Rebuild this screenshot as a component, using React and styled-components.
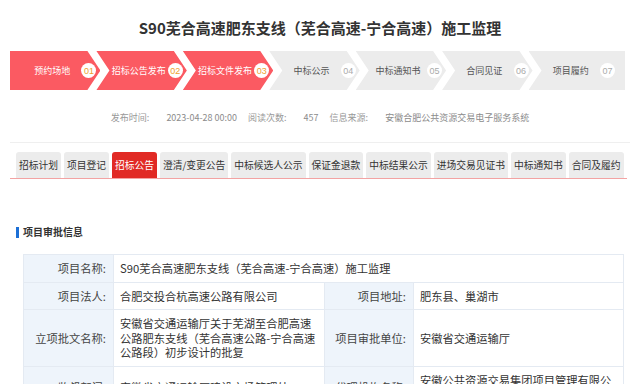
import React from 'react';
import styled, { createGlobalStyle, css } from 'styled-components';

const GlobalStyle = createGlobalStyle`
  html, body { margin: 0; padding: 0; background: #fff; }
  body { font-family: "Noto Sans CJK SC", "Noto Sans", sans-serif; color: #333; }
  * { box-sizing: border-box; }
`;

const Page = styled.div`
  width: 640px;
  padding: 0 10px;
`;

const Title = styled.h1`
  margin: 0;
  padding: 17px 0 12px;
  font-size: 15px;
  line-height: 22px;
  font-weight: 700;
  text-align: center;
  color: #333;
`;

const Steps = styled.div`
  display: flex;
  width: 615px;
  height: 39px;
`;

const clips = {
  first: 'polygon(0 0, calc(100% - 13px) 0, 100% 50%, calc(100% - 13px) 100%, 0 100%)',
  mid: 'polygon(0 0, calc(100% - 13px) 0, 100% 50%, calc(100% - 13px) 100%, 0 100%, 13px 50%)',
  last: 'polygon(0 0, 100% 0, 100% 100%, 0 100%, 13px 50%)',
};

const Step = styled.div`
  flex: 1 1 0;
  display: flex;
  align-items: center;
  padding: 0 ${p => (p.$pos === 'last' ? '10px' : '4px')} 0 13px;
  margin-left: ${p => (p.$pos === 'first' ? '0' : '-4px')};
  background: ${p => (p.$done ? '#fb5a62' : '#ececec')};
  clip-path: ${p => clips[p.$pos]};
`;

const StepLabel = styled.span`
  flex: 1;
  text-align: center;
  font-size: 9px;
  white-space: nowrap;
  color: ${p => (p.$done ? '#fff' : '#555')};
`;

const StepNum = styled.span`
  flex: none;
  width: 15px;
  height: 15px;
  border-radius: 50%;
  background: #fff;
  display: flex;
  align-items: center;
  justify-content: center;
  font-family: "Liberation Sans", sans-serif;
  font-size: 9px;
  color: ${p => (p.$done ? '#f0a130' : '#aaa')};
`;

const Meta = styled.div`
  display: flex;
  justify-content: center;
  margin-top: 21px;
  padding-bottom: 17px;
  border-bottom: 1px solid #efefef;
  font-size: 9px;
  line-height: 14px;
  color: #999;
`;

const MetaLabel = styled.span`
  margin-right: 17px;
`;

const MetaValue = styled.span`
  margin-right: ${p => (p.$last ? '0' : '11px')};
  color: #8c8c8c;
`;

const Tabs = styled.div`
  display: flex;
  gap: 3px;
  width: 617px;
  margin-top: 9px;
  padding-left: 6px;
  border-bottom: 1px solid #f3a3a3;
`;

const Tab = styled.div`
  height: 26px;
  padding: 0 3px;
  display: flex;
  align-items: center;
  font-size: 9.75px;
  white-space: nowrap;
  border-radius: 3px 3px 0 0;
  background: #ececec;
  color: #333;
  ${p => p.$active && css`
    background: #e12a25;
    color: #fff;
  `}
`;

const SectionHead = styled.div`
  display: flex;
  align-items: center;
  gap: 4px;
  margin: 46px 0 0 6px;
  font-size: 10px;
  line-height: 14px;
  font-weight: 700;
  color: #333;
`;

const Bar = styled.span`
  width: 3px;
  height: 11px;
  background: #1c6fd6;
`;

const Table = styled.table`
  margin: 15px 0 0 13px;
  width: 600px;
  table-layout: fixed;
  border-collapse: collapse;
  font-size: 11.25px;
  line-height: 14.5px;
`;

const Label = styled.th`
  padding: 6px 7px 6px 6px;
  border: 1px solid #e4eaf2;
  background: #eef4fb;
  font-weight: 400;
  text-align: right;
  white-space: nowrap;
  color: #444;
`;

const Value = styled.td`
  padding: 6px;
  border: 1px solid #e4eaf2;
  background: #fff;
  text-align: left;
  color: #333;
`;

const steps = [
  { label: '预约场地', n: '01', done: true },
  { label: '招标公告发布', n: '02', done: true },
  { label: '招标文件发布', n: '03', done: true },
  { label: '中标公示', n: '04' },
  { label: '中标通知书', n: '05' },
  { label: '合同见证', n: '06' },
  { label: '项目履约', n: '07' },
];

const tabs = ['招标计划', '项目登记', '招标公告', '澄清/变更公告', '中标候选人公示', '保证金退款', '中标结果公示', '进场交易见证书', '中标通知书', '合同及履约'];

const title = 'S90芜合高速肥东支线（芜合高速-宁合高速）施工监理';

export default function App() {
  return (
    <>
      <GlobalStyle />
      <Page>
        <Title>{title}</Title>
        <Steps>
          {steps.map((s, i) => (
            <Step key={s.n} $done={s.done} $pos={i === 0 ? 'first' : i === steps.length - 1 ? 'last' : 'mid'}>
              <StepLabel $done={s.done}>{s.label}</StepLabel>
              <StepNum $done={s.done}>{s.n}</StepNum>
            </Step>
          ))}
        </Steps>
        <Meta>
          <MetaLabel>发布时间:</MetaLabel>
          <MetaValue>2023-04-28 00:00</MetaValue>
          <MetaLabel>阅读次数:</MetaLabel>
          <MetaValue>457</MetaValue>
          <MetaLabel>信息来源:</MetaLabel>
          <MetaValue $last>安徽合肥公共资源交易电子服务系统</MetaValue>
        </Meta>
        <Tabs>
          {tabs.map(t => (
            <Tab key={t} $active={t === '招标公告'}>{t}</Tab>
          ))}
        </Tabs>
        <SectionHead><Bar />项目审批信息</SectionHead>
        <Table>
          <colgroup>
            <col style={{ width: 90 }} />
            <col style={{ width: 211 }} />
            <col style={{ width: 89 }} />
            <col style={{ width: 210 }} />
          </colgroup>
          <tbody>
            <tr>
              <Label>项目名称:</Label>
              <Value colSpan={3}>{title}</Value>
            </tr>
            <tr>
              <Label>项目法人:</Label>
              <Value>合肥交投合杭高速公路有限公司</Value>
              <Label>项目地址:</Label>
              <Value>肥东县、巢湖市</Value>
            </tr>
            <tr>
              <Label>立项批文名称:</Label>
              <Value>安徽省交通运输厅关于芜湖至合肥高速公路肥东支线（芜合高速公路-宁合高速公路段）初步设计的批复</Value>
              <Label>项目审批单位:</Label>
              <Value>安徽省交通运输厅</Value>
            </tr>
            <tr>
              <Label>监督部门:</Label>
              <Value>安徽省交通运输厅建设市场管理处</Value>
              <Label>代理机构名称:</Label>
              <Value>安徽公共资源交易集团项目管理有限公司</Value>
            </tr>
            <tr>
              <Label>代理机构联系人:</Label>
              <Value>王工</Value>
              <Label>联系电话:</Label>
              <Value>0551-66223800</Value>
            </tr>
          </tbody>
        </Table>
      </Page>
    </>
  );
}
